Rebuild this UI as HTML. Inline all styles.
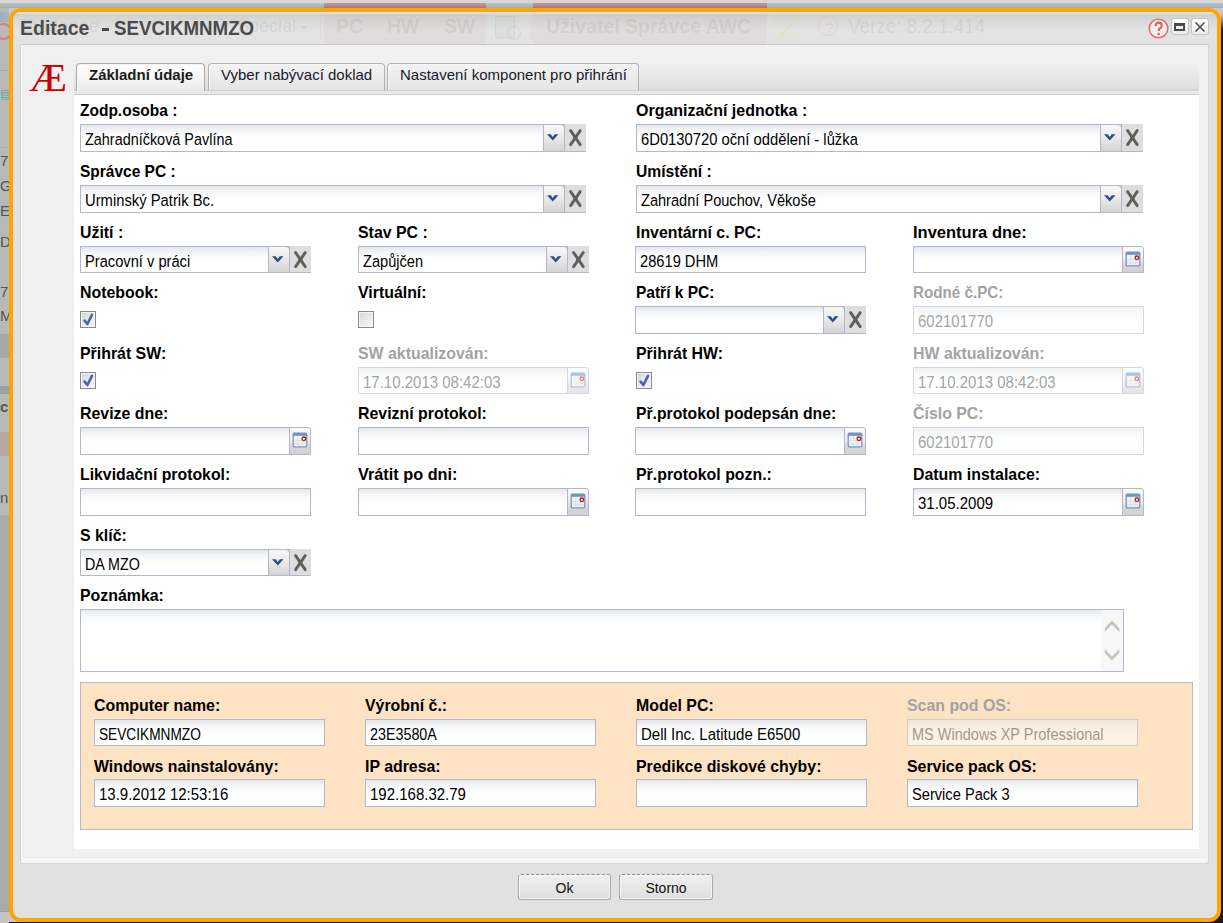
<!DOCTYPE html>
<html><head><meta charset="utf-8">
<style>
*{box-sizing:border-box}
html,body{margin:0;padding:0}
body{width:1223px;height:923px;position:relative;overflow:hidden;background:#c9c9c9;font-family:"Liberation Sans",sans-serif}
.abs{position:absolute}
/* background page */
.bgtop{position:absolute;left:0;top:0;width:1223px;height:3px;background:#d6d6d6}
.bgstrip{position:absolute;top:3px;height:5px;background:linear-gradient(#c0c3c6,#a2aab2)}
.bgred{position:absolute;top:3px;height:5px;background:linear-gradient(#c49a9a,#a87878)}
.bgleft{position:absolute;left:0;top:8px;width:9px;height:915px;background:#b9b9b9}
.bgright{position:absolute;left:1221px;top:12px;width:2px;height:911px;background:linear-gradient(#cfcfcf 0,#8a8a8a 8px,#1c1c1c 18px,#1c1c1c 100%)}
/* dialog */
.dlg{position:absolute;left:9px;top:8px;width:1212px;height:914px;border:4px solid #ffa500;border-radius:12px;background:#e1e1e1;overflow:hidden}
.tbar{position:absolute;left:0;top:0;width:1204px;height:32px;background:linear-gradient(#dde1e8 0,#dde1e8 2px,#cfd0d1 2px,#dadada 10px,#e3e3e3 18px,#e2e2e2 100%)}
.lg{left:0;font-size:15px;line-height:15px;color:#555;white-space:nowrap}
.ttl{position:absolute;left:7px;top:7px;font-weight:bold;font-size:19.5px;line-height:19.5px;color:#4b4b4b;white-space:nowrap}
.ghost{position:absolute;white-space:nowrap;font-weight:bold;color:rgba(120,120,120,0.15)}
.cpan{position:absolute;left:20px;top:44px;width:1189px;height:820px;background:linear-gradient(#f0f0f0 0,#f0f0f0 calc(100% - 5px),#f6f6f6 calc(100% - 5px));border:1px solid #d6d6d6;border-top-color:#cbcbcb;border-radius:0 0 3px 3px;box-shadow:inset 1px 0 0 #f8f8f8}
.tabbar{position:absolute;left:74px;top:61px;width:1125px;height:34px;background:linear-gradient(#f1f1f1 0,#dfdfdf 28px,#d2d2d2 29px,#d2d2d2 30px,#e9e9e9 30px,#e9e9e9 33px,#cdcdcd 33px)}
.tab{position:absolute;top:63px;height:28px;border:1px solid #b3b3b3;border-bottom-color:#cfcfcf;border-radius:4px 4px 0 0;background:linear-gradient(#f3f3f3 0,#e5e5e5 100%);box-shadow:inset 1px 1px 0 #f6f6f6;font-size:15px;line-height:15px;color:#1a1a2a;white-space:nowrap}
.tab span{position:absolute;top:3px}
.tab.act{background:linear-gradient(#ffffff 0,#fafafa 35%,#e9e9e9 100%);border-color:#aaaaaa;border-bottom:none;color:#1a1a1a;font-weight:bold}
.white{position:absolute;left:74px;top:95px;width:1125px;height:754px;background:#fff}
.logo{position:absolute;left:29px;top:58px;transform:scaleX(1.1);transform-origin:0 0;font-family:"Liberation Serif",serif;font-size:39px;line-height:39px;color:#cc0000}
.lbl{position:absolute;font-weight:bold;font-size:15.75px;line-height:15.75px;color:#000;white-space:nowrap;transform-origin:0 80%}
.lbl.dis{color:#a3a3a3}
.inp{position:absolute;border:1px solid #b4b7cc;background:linear-gradient(#e4e7ea 0,#f2f4f5 5px,#fcfcfd 10px,#fff 14px)}
.inp .tx{position:absolute;left:4px;top:7px;font-size:15px;line-height:15px;color:#000;white-space:nowrap;transform-origin:0 80%}
.inp.dis{opacity:0.55}
.inp.dis .tx{color:#5a5a5a}
.inp.cal{border-radius:0 3px 0 0}
.dd{position:absolute;right:-1px;top:-1px;bottom:-1px;width:22px;border:1px solid #b4b7cc;border-radius:0 4px 0 0;background:linear-gradient(#f7f7f7 0,#ececec 40%,#d4d4d4 100%)}
.dd svg{position:absolute;left:3px;top:9px}
.xb{position:absolute;width:21px;background:#dedede;border-bottom:1px solid #b4b7cc}
.xb svg{position:absolute;left:3px;top:4px}
.cb{position:absolute;right:0;top:0;bottom:0;width:21px;border-left:1px solid #b4b7cc;border-radius:0 3px 0 0;background:linear-gradient(#f9f9f9 0,#efefef 45%,#d6d6d6 75%,#d2d2d2 100%)}
.cb svg{position:absolute;left:2px;top:4px}
.chk{position:absolute;width:16px;height:17px;border:1px solid #8a8a8a;background:linear-gradient(135deg,#cfd3db 0,#e6e8ec 45%,#f5f5f5 100%);box-shadow:inset 0 0 0 1px #f4f4f4}
.chk svg{position:absolute;left:-1px;top:-1px}
.inp.ta{background:linear-gradient(#e5e9eb 0,#f6f7f8 6px,#fff 12px)}
.sb{position:absolute;right:0;top:0;bottom:0;width:22px;background:#f7f7f7}
.sb svg{position:absolute;left:3px;top:6px}
.opan{position:absolute;left:80px;top:682px;width:1113px;height:148px;background:#fde3c4;border:1px solid #b9b9c6}
.btn{position:absolute;top:874px;height:26px;border:1px solid #a8a8a8;border-top:1px dashed #8c8c8c;border-radius:3px;background:linear-gradient(#f0f0f0,#dedede);box-shadow:inset 1px 1px 0 #fbfbfb,inset -1px -1px 0 #f4f4f4;font-size:14px;line-height:14px;color:#111;text-align:center}
.btn span{position:absolute;left:0;right:0;top:6px}
</style></head><body>
<div class="bgtop"></div>
<div class="bgstrip" style="left:0;width:1223px"></div>
<div class="bgred" style="left:324px;width:162px"></div>
<div class="bgred" style="left:533px;width:234px"></div>
<div class="bgleft">
  <div class="abs" style="left:0;top:4px;width:9px;height:10px;background:linear-gradient(90deg,#9fb0b4,#a8b8bc)"></div>
  <div class="abs" style="left:-5px;top:15px;width:17px;height:17px;border:2px solid rgba(215,110,110,0.75);border-radius:50%"></div>
  <div class="abs" style="left:0;top:62px;width:9px;height:77px;background:#b9b9b9;border-top:1px solid #a6a6a6"></div>
  <div class="abs" style="left:0;top:80px;width:9px;height:12px;color:#5fa8a8;font-size:12px;line-height:12px">▤</div>
  <div class="abs" style="left:0;top:139px;width:9px;height:1px;background:#a9a9a9"></div>
  <div class="abs" style="left:0;top:192px;width:9px;height:23px;background:#b3b8c0"></div>
  <div class="abs lg" style="top:145px">7</div>
  <div class="abs lg" style="top:170px">G</div>
  <div class="abs lg" style="top:195px">E</div>
  <div class="abs lg" style="top:226px">D</div>
  <div class="abs lg" style="top:276px">7</div>
  <div class="abs lg" style="top:300px">M</div>
  <div class="abs" style="left:0;top:326px;width:9px;height:24px;background:#a7a7a7"></div>
  <div class="abs" style="left:0;top:378px;width:9px;height:8px;background:#9aa1aa"></div>
  <div class="abs lg" style="top:391px;font-weight:bold">c</div>
  <div class="abs" style="left:0;top:424px;width:9px;height:24px;background:#b2aaa2"></div>
  <div class="abs lg" style="top:482px">n</div>
  <div class="abs" style="left:0;top:507px;width:9px;height:396px;background:#ababab"></div>
  <div class="abs" style="left:0;top:903px;width:9px;height:20px;background:#c4c4c4;border-top:1px solid #9c9c9c"></div>
</div>
<div class="bgright"></div>
<div class="abs" style="left:1195px;top:890px;width:28px;height:33px;background:#1c1c1c"></div>
<div class="abs" style="left:22px;top:912px;width:40px;height:11px;background:#1c1c1c"></div>
<div class="abs" style="left:9px;top:922px;width:1214px;height:1px;background:#161616"></div>
<div class="dlg">
  <div class="tbar"></div>
  <div class="ghost" style="left:8px;top:3px;font-weight:normal;font-size:19px">Evidence - Li</div>
  <div class="ghost" style="left:224px;top:3px;font-weight:normal;font-size:19px;transform:scaleX(0.95);transform-origin:0 0">Speciál</div><svg class="abs" style="left:287px;top:14px" width="8" height="5"><path d="M0 0 L8 0 L4 4 Z" fill="rgba(120,120,120,0.12)"/></svg>
  <div class="abs" style="left:311px;top:2px;width:162px;height:30px;background:rgba(170,80,80,0.045)"></div>
  <div class="abs" style="left:520px;top:2px;width:234px;height:30px;background:rgba(170,80,80,0.045)"></div>
  <div class="ghost" style="left:323px;top:3px;font-size:19.5px">PC</div>
  <div class="ghost" style="left:374px;top:3px;font-size:19.5px">HW</div>
  <div class="ghost" style="left:431px;top:3px;font-size:19.5px">SW</div>
  <div class="abs" style="left:518px;top:5px;width:1px;height:22px;background:rgba(150,150,150,0.12)"></div>
  <div class="abs" style="left:307px;top:3px;width:1px;height:24px;background:rgba(150,150,150,0.12)"></div>
  <div class="abs" style="left:482px;top:4px;width:20px;height:22px;border:1px solid rgba(120,130,140,0.10);background:rgba(140,150,160,0.06)"></div>
  <div class="abs" style="left:494px;top:14px;width:14px;height:14px;border:1.5px solid rgba(220,90,90,0.14);border-radius:50%"></div>
  <div class="abs" style="left:760px;top:2px;width:28px;height:28px;background:rgba(200,200,140,0.04)"><svg class="abs" style="left:0;top:0" width="28" height="28"><path d="M6 24 L24 4" stroke="rgba(230,220,80,0.18)" stroke-width="2"/></svg></div>
  <div class="ghost" style="left:533px;top:3px;font-size:19.5px">Uživatel Správce AWC</div>
  <div class="abs" style="left:805px;top:4px;width:20px;height:20px;border:1.5px solid rgba(220,100,100,0.12);border-radius:50%"></div>
  <div class="ghost" style="left:835px;top:3px;font-weight:normal;font-size:19.5px;transform:scaleX(0.965);transform-origin:0 0">Verze: 8.2.1.414</div>
  <div class="ghost" style="left:812px;top:7px;font-size:15px;color:rgba(220,100,100,0.13)">?</div>
  <div class="ttl">Editace</div><div class="abs" style="left:89px;top:16px;width:7px;height:2.6px;background:#4b4b4b"></div><div class="ttl" style="left:101px;transform:scaleX(0.958);transform-origin:0 0">SEVCIKMNMZO</div>
  <div class="abs" style="left:1135px;top:6px"><svg width="22" height="22" viewBox="0 0 22 22"><circle cx="10.5" cy="10.5" r="9.3" fill="#f3eeee" stroke="#e07070" stroke-width="1.6"/><path d="M7.6 8 Q7.6 4.6 10.7 4.6 Q13.8 4.6 13.8 7.6 Q13.8 9.4 11.8 10.5 Q10.7 11.2 10.7 13" fill="none" stroke="#de5d5d" stroke-width="2.1"/><circle cx="10.7" cy="16" r="1.3" fill="#de5d5d"/></svg></div>
  <div class="abs" style="left:1158px;top:6px;width:18px;height:17px;border:1px solid #c4c4c4;border-radius:3px;background:linear-gradient(#fdfdfd,#ececec)"><div class="abs" style="left:2px;top:4px;width:11px;height:8px;border:2px solid #4a4a4a;border-top-width:3px"></div></div>
  <div class="abs" style="left:1178px;top:6px;width:18px;height:17px;border:1px solid #c4c4c4;border-radius:3px;background:linear-gradient(#fdfdfd,#ececec)"><svg class="abs" style="left:2px;top:2px" width="12" height="12" viewBox="0 0 12 12"><path d="M1.5 1.5 L10.5 10.5 M10.5 1.5 L1.5 10.5" stroke="#4a4a4a" stroke-width="1.5"/></svg></div>
</div>
<div class="cpan"></div>
<div class="logo">Æ</div>
<div class="tabbar"></div>
<div class="tab act" style="left:76px;width:129px"><span style="left:12px">Základní údaje</span></div>
<div class="tab" style="left:208px;width:177px"><span style="left:12px">Vyber nabývací doklad</span></div>
<div class="tab" style="left:387px;width:252px"><span style="left:12px">Nastavení komponent pro přihrání</span></div>
<div class="white"></div>
<div class="lbl" style="left:80px;top:103.27px;transform:scale(0.9841,1)">Zodp.osoba :</div>
<div class="inp" style="left:80px;top:124px;width:485px;height:28px"><span class="tx" style="transform:scale(0.961,1.07)">Zahradníčková Pavlína</span><div class="dd"><svg width="12" height="7" viewBox="0 0 12 7"><path d="M0 0.2 L3.7 0.2 L5.75 2.9 L7.8 0.2 L11.5 0.2 L5.75 6.6 Z" fill="#2b4b8d"/></svg></div></div>
<div class="xb" style="left:565px;top:124px;height:28px"><svg width="15" height="19" viewBox="0 0 15 19"><path d="M2.6 2.6 L12.2 16.6 M12.2 2.6 L2.6 16.6" stroke="#5f5f5f" stroke-width="2.9" stroke-linecap="round"/><rect x="5.4" y="7.6" width="4" height="4" fill="#5f5f5f"/></svg></div>
<div class="lbl" style="left:636px;top:103.27px;transform:scale(1.0137,1)">Organizační jednotka :</div>
<div class="inp" style="left:636px;top:124px;width:486px;height:28px"><span class="tx" style="transform:scale(0.985,1.07)">6D0130720 oční oddělení - lůžka</span><div class="dd"><svg width="12" height="7" viewBox="0 0 12 7"><path d="M0 0.2 L3.7 0.2 L5.75 2.9 L7.8 0.2 L11.5 0.2 L5.75 6.6 Z" fill="#2b4b8d"/></svg></div></div>
<div class="xb" style="left:1122px;top:124px;height:28px"><svg width="15" height="19" viewBox="0 0 15 19"><path d="M2.6 2.6 L12.2 16.6 M12.2 2.6 L2.6 16.6" stroke="#5f5f5f" stroke-width="2.9" stroke-linecap="round"/><rect x="5.4" y="7.6" width="4" height="4" fill="#5f5f5f"/></svg></div>
<div class="lbl" style="left:80px;top:164.27px;transform:scale(0.9841,1)">Správce PC :</div>
<div class="inp" style="left:80px;top:185px;width:485px;height:28px"><span class="tx" style="transform:scale(0.986,1.07)">Urminský Patrik Bc.</span><div class="dd"><svg width="12" height="7" viewBox="0 0 12 7"><path d="M0 0.2 L3.7 0.2 L5.75 2.9 L7.8 0.2 L11.5 0.2 L5.75 6.6 Z" fill="#2b4b8d"/></svg></div></div>
<div class="xb" style="left:565px;top:185px;height:28px"><svg width="15" height="19" viewBox="0 0 15 19"><path d="M2.6 2.6 L12.2 16.6 M12.2 2.6 L2.6 16.6" stroke="#5f5f5f" stroke-width="2.9" stroke-linecap="round"/><rect x="5.4" y="7.6" width="4" height="4" fill="#5f5f5f"/></svg></div>
<div class="lbl" style="left:636px;top:164.27px;transform:scale(0.9940,1)">Umístění :</div>
<div class="inp" style="left:636px;top:185px;width:486px;height:28px"><span class="tx" style="transform:scale(0.972,1.07)">Zahradní Pouchov, Věkoše</span><div class="dd"><svg width="12" height="7" viewBox="0 0 12 7"><path d="M0 0.2 L3.7 0.2 L5.75 2.9 L7.8 0.2 L11.5 0.2 L5.75 6.6 Z" fill="#2b4b8d"/></svg></div></div>
<div class="xb" style="left:1122px;top:185px;height:28px"><svg width="15" height="19" viewBox="0 0 15 19"><path d="M2.6 2.6 L12.2 16.6 M12.2 2.6 L2.6 16.6" stroke="#5f5f5f" stroke-width="2.9" stroke-linecap="round"/><rect x="5.4" y="7.6" width="4" height="4" fill="#5f5f5f"/></svg></div>
<div class="lbl" style="left:80px;top:225.27px;transform:scale(1.0087,1)">Užití :</div>
<div class="inp" style="left:80px;top:246px;width:210px;height:27px"><span class="tx" style="transform:scale(0.978,1.07)">Pracovní v práci</span><div class="dd"><svg width="12" height="7" viewBox="0 0 12 7"><path d="M0 0.2 L3.7 0.2 L5.75 2.9 L7.8 0.2 L11.5 0.2 L5.75 6.6 Z" fill="#2b4b8d"/></svg></div></div>
<div class="xb" style="left:290px;top:246px;height:27px"><svg width="15" height="19" viewBox="0 0 15 19"><path d="M2.6 2.6 L12.2 16.6 M12.2 2.6 L2.6 16.6" stroke="#5f5f5f" stroke-width="2.9" stroke-linecap="round"/><rect x="5.4" y="7.6" width="4" height="4" fill="#5f5f5f"/></svg></div>
<div class="lbl" style="left:358px;top:225.27px;transform:scale(1.0087,1)">Stav PC :</div>
<div class="inp" style="left:358px;top:246px;width:210px;height:27px"><span class="tx" style="transform:scale(0.974,1.07)">Zapůjčen</span><div class="dd"><svg width="12" height="7" viewBox="0 0 12 7"><path d="M0 0.2 L3.7 0.2 L5.75 2.9 L7.8 0.2 L11.5 0.2 L5.75 6.6 Z" fill="#2b4b8d"/></svg></div></div>
<div class="xb" style="left:568px;top:246px;height:27px"><svg width="15" height="19" viewBox="0 0 15 19"><path d="M2.6 2.6 L12.2 16.6 M12.2 2.6 L2.6 16.6" stroke="#5f5f5f" stroke-width="2.9" stroke-linecap="round"/><rect x="5.4" y="7.6" width="4" height="4" fill="#5f5f5f"/></svg></div>
<div class="lbl" style="left:636px;top:225.27px;transform:scale(1.0087,1)">Inventární c. PC:</div>
<div class="inp" style="left:635px;top:246px;width:231px;height:27px"><span class="tx" style="transform:scale(0.978,1.07)">28619 DHM</span></div>
<div class="lbl" style="left:913px;top:225.27px;transform:scale(1.0481,1)">Inventura dne:</div>
<div class="inp cal" style="left:913px;top:246px;width:231px;height:27px"><span class="tx" style="transform:scale(1.0,1.07)"></span><div class="cb"><svg width="16" height="16" viewBox="0 0 16 16"><rect x="1.2" y="1.2" width="13.6" height="13.6" rx="1.2" fill="#f2f2f2" stroke="#7593c4" stroke-width="1.3"/><rect x="1" y="1" width="14" height="2.8" fill="#7391c2"/><path d="M5.8 4 V14.5 M10.2 4 V14.5 M1.8 8.6 H14.2 M1.8 11.8 H14.2" stroke="#dcdcdc" stroke-width="0.9"/><circle cx="11.9" cy="6.8" r="1.8" fill="#fafafa" stroke="#b21a1a" stroke-width="1.3"/></svg></div></div>
<div class="lbl" style="left:80px;top:285.27px;transform:scale(1.0087,1)">Notebook:</div>
<div class="chk" style="left:80px;top:311px"><svg width="16" height="17" viewBox="0 0 16 17"><path d="M4.6 9.6 L7.4 13 L12 3.8" stroke="#4d64aa" stroke-width="2.6" fill="none" stroke-linejoin="round" stroke-linecap="round"/></svg></div>
<div class="lbl" style="left:358px;top:285.27px;transform:scale(1.0087,1)">Virtuální:</div>
<div class="chk" style="left:358px;top:311px"></div>
<div class="lbl" style="left:636px;top:285.27px;transform:scale(0.9841,1)">Patří k PC:</div>
<div class="inp" style="left:635px;top:306px;width:210px;height:28px"><span class="tx" style="transform:scale(1.0,1.07)"></span><div class="dd"><svg width="12" height="7" viewBox="0 0 12 7"><path d="M0 0.2 L3.7 0.2 L5.75 2.9 L7.8 0.2 L11.5 0.2 L5.75 6.6 Z" fill="#2b4b8d"/></svg></div></div>
<div class="xb" style="left:845px;top:306px;height:28px"><svg width="15" height="19" viewBox="0 0 15 19"><path d="M2.6 2.6 L12.2 16.6 M12.2 2.6 L2.6 16.6" stroke="#5f5f5f" stroke-width="2.9" stroke-linecap="round"/><rect x="5.4" y="7.6" width="4" height="4" fill="#5f5f5f"/></svg></div>
<div class="lbl dis" style="left:913px;top:285.27px;transform:scale(0.9644,1)">Rodné č.PC:</div>
<div class="inp dis" style="left:913px;top:306px;width:231px;height:28px"><span class="tx" style="transform:scale(1.0,1.07)">602101770</span></div>
<div class="lbl" style="left:80px;top:346.27px;transform:scale(1.0087,1)">Přihrát SW:</div>
<div class="chk" style="left:80px;top:372px"><svg width="16" height="17" viewBox="0 0 16 17"><path d="M4.6 9.6 L7.4 13 L12 3.8" stroke="#4d64aa" stroke-width="2.6" fill="none" stroke-linejoin="round" stroke-linecap="round"/></svg></div>
<div class="lbl dis" style="left:358px;top:346.27px;transform:scale(1.0087,1)">SW aktualizován:</div>
<div class="inp dis cal" style="left:358px;top:367px;width:231px;height:27px"><span class="tx" style="transform:scale(1.0,1.07)">17.10.2013 08:42:03</span><div class="cb"><svg width="16" height="16" viewBox="0 0 16 16"><rect x="1.2" y="1.2" width="13.6" height="13.6" rx="1.2" fill="#f2f2f2" stroke="#7593c4" stroke-width="1.3"/><rect x="1" y="1" width="14" height="2.8" fill="#7391c2"/><path d="M5.8 4 V14.5 M10.2 4 V14.5 M1.8 8.6 H14.2 M1.8 11.8 H14.2" stroke="#dcdcdc" stroke-width="0.9"/><circle cx="11.9" cy="6.8" r="1.8" fill="#fafafa" stroke="#b21a1a" stroke-width="1.3"/></svg></div></div>
<div class="lbl" style="left:636px;top:346.27px;transform:scale(1.0087,1)">Přihrát HW:</div>
<div class="chk" style="left:636px;top:372px"><svg width="16" height="17" viewBox="0 0 16 17"><path d="M4.6 9.6 L7.4 13 L12 3.8" stroke="#4d64aa" stroke-width="2.6" fill="none" stroke-linejoin="round" stroke-linecap="round"/></svg></div>
<div class="lbl dis" style="left:913px;top:346.27px;transform:scale(1.0087,1)">HW aktualizován:</div>
<div class="inp dis cal" style="left:913px;top:367px;width:231px;height:27px"><span class="tx" style="transform:scale(1.0,1.07)">17.10.2013 08:42:03</span><div class="cb"><svg width="16" height="16" viewBox="0 0 16 16"><rect x="1.2" y="1.2" width="13.6" height="13.6" rx="1.2" fill="#f2f2f2" stroke="#7593c4" stroke-width="1.3"/><rect x="1" y="1" width="14" height="2.8" fill="#7391c2"/><path d="M5.8 4 V14.5 M10.2 4 V14.5 M1.8 8.6 H14.2 M1.8 11.8 H14.2" stroke="#dcdcdc" stroke-width="0.9"/><circle cx="11.9" cy="6.8" r="1.8" fill="#fafafa" stroke="#b21a1a" stroke-width="1.3"/></svg></div></div>
<div class="lbl" style="left:80px;top:406.27px;transform:scale(1.0087,1)">Revize dne:</div>
<div class="inp cal" style="left:80px;top:427px;width:231px;height:28px"><span class="tx" style="transform:scale(1.0,1.07)"></span><div class="cb"><svg width="16" height="16" viewBox="0 0 16 16"><rect x="1.2" y="1.2" width="13.6" height="13.6" rx="1.2" fill="#f2f2f2" stroke="#7593c4" stroke-width="1.3"/><rect x="1" y="1" width="14" height="2.8" fill="#7391c2"/><path d="M5.8 4 V14.5 M10.2 4 V14.5 M1.8 8.6 H14.2 M1.8 11.8 H14.2" stroke="#dcdcdc" stroke-width="0.9"/><circle cx="11.9" cy="6.8" r="1.8" fill="#fafafa" stroke="#b21a1a" stroke-width="1.3"/></svg></div></div>
<div class="lbl" style="left:358px;top:406.27px;transform:scale(1.0087,1)">Revizní protokol:</div>
<div class="inp" style="left:358px;top:427px;width:231px;height:28px"><span class="tx" style="transform:scale(1.0,1.07)"></span></div>
<div class="lbl" style="left:636px;top:406.27px;transform:scale(0.9989,1)">Př.protokol podepsán dne:</div>
<div class="inp cal" style="left:635px;top:427px;width:231px;height:28px"><span class="tx" style="transform:scale(1.0,1.07)"></span><div class="cb"><svg width="16" height="16" viewBox="0 0 16 16"><rect x="1.2" y="1.2" width="13.6" height="13.6" rx="1.2" fill="#f2f2f2" stroke="#7593c4" stroke-width="1.3"/><rect x="1" y="1" width="14" height="2.8" fill="#7391c2"/><path d="M5.8 4 V14.5 M10.2 4 V14.5 M1.8 8.6 H14.2 M1.8 11.8 H14.2" stroke="#dcdcdc" stroke-width="0.9"/><circle cx="11.9" cy="6.8" r="1.8" fill="#fafafa" stroke="#b21a1a" stroke-width="1.3"/></svg></div></div>
<div class="lbl dis" style="left:913px;top:406.27px;transform:scale(1.0087,1)">Číslo PC:</div>
<div class="inp dis" style="left:913px;top:427px;width:231px;height:28px"><span class="tx" style="transform:scale(1.0,1.07)">602101770</span></div>
<div class="lbl" style="left:80px;top:467.27px;transform:scale(1.0038,1)">Likvidační protokol:</div>
<div class="inp" style="left:80px;top:488px;width:231px;height:28px"><span class="tx" style="transform:scale(1.0,1.07)"></span></div>
<div class="lbl" style="left:358px;top:467.27px;transform:scale(1.0333,1)">Vrátit po dni:</div>
<div class="inp cal" style="left:358px;top:488px;width:231px;height:28px"><span class="tx" style="transform:scale(1.0,1.07)"></span><div class="cb"><svg width="16" height="16" viewBox="0 0 16 16"><rect x="1.2" y="1.2" width="13.6" height="13.6" rx="1.2" fill="#f2f2f2" stroke="#7593c4" stroke-width="1.3"/><rect x="1" y="1" width="14" height="2.8" fill="#7391c2"/><path d="M5.8 4 V14.5 M10.2 4 V14.5 M1.8 8.6 H14.2 M1.8 11.8 H14.2" stroke="#dcdcdc" stroke-width="0.9"/><circle cx="11.9" cy="6.8" r="1.8" fill="#fafafa" stroke="#b21a1a" stroke-width="1.3"/></svg></div></div>
<div class="lbl" style="left:636px;top:467.27px;transform:scale(1.0087,1)">Př.protokol pozn.:</div>
<div class="inp" style="left:635px;top:488px;width:231px;height:28px"><span class="tx" style="transform:scale(1.0,1.07)"></span></div>
<div class="lbl" style="left:913px;top:467.27px;transform:scale(1.0087,1)">Datum instalace:</div>
<div class="inp cal" style="left:913px;top:488px;width:231px;height:28px"><span class="tx" style="transform:scale(1.0,1.07)">31.05.2009</span><div class="cb"><svg width="16" height="16" viewBox="0 0 16 16"><rect x="1.2" y="1.2" width="13.6" height="13.6" rx="1.2" fill="#f2f2f2" stroke="#7593c4" stroke-width="1.3"/><rect x="1" y="1" width="14" height="2.8" fill="#7391c2"/><path d="M5.8 4 V14.5 M10.2 4 V14.5 M1.8 8.6 H14.2 M1.8 11.8 H14.2" stroke="#dcdcdc" stroke-width="0.9"/><circle cx="11.9" cy="6.8" r="1.8" fill="#fafafa" stroke="#b21a1a" stroke-width="1.3"/></svg></div></div>
<div class="lbl" style="left:80px;top:528.27px;transform:scale(1.0087,1)">S klíč:</div>
<div class="inp" style="left:80px;top:549px;width:210px;height:27px"><span class="tx" style="transform:scale(0.954,1.07)">DA MZO</span><div class="dd"><svg width="12" height="7" viewBox="0 0 12 7"><path d="M0 0.2 L3.7 0.2 L5.75 2.9 L7.8 0.2 L11.5 0.2 L5.75 6.6 Z" fill="#2b4b8d"/></svg></div></div>
<div class="xb" style="left:290px;top:549px;height:27px"><svg width="15" height="19" viewBox="0 0 15 19"><path d="M2.6 2.6 L12.2 16.6 M12.2 2.6 L2.6 16.6" stroke="#5f5f5f" stroke-width="2.9" stroke-linecap="round"/><rect x="5.4" y="7.6" width="4" height="4" fill="#5f5f5f"/></svg></div>
<div class="lbl" style="left:80px;top:588.27px;transform:scale(1.0087,1)">Poznámka:</div>
<div class="inp ta" style="left:80px;top:609px;width:1044px;height:63px"><div class="sb"><svg width="17" height="50" viewBox="0 0 17 50"><path d="M0.8 15.8 L0.8 12.3 L7.9 4.6 L15.3 12.3 L15.3 15.8 L7.9 8.4 Z" fill="#c2c2c2"/><path d="M0.8 33.2 L0.8 36.7 L7.9 44.4 L15.3 36.7 L15.3 33.2 L7.9 40.6 Z" fill="#c2c2c2"/></svg></div></div>
<div class="opan"></div>
<div class="lbl" style="left:94px;top:698.27px;transform:scale(1.0087,1)">Computer name:</div>
<div class="inp" style="left:94px;top:719px;width:231px;height:27px"><span class="tx" style="transform:scale(0.912,1.07)">SEVCIKMNMZO</span></div>
<div class="lbl" style="left:365px;top:698.27px;transform:scale(1.0087,1)">Výrobní č.:</div>
<div class="inp" style="left:365px;top:719px;width:231px;height:27px"><span class="tx" style="transform:scale(0.954,1.07)">23E3580A</span></div>
<div class="lbl" style="left:636px;top:698.27px;transform:scale(1.0087,1)">Model PC:</div>
<div class="inp" style="left:636px;top:719px;width:231px;height:27px"><span class="tx" style="transform:scale(1.0,1.07)">Dell Inc. Latitude E6500</span></div>
<div class="lbl dis" style="left:907px;top:698.27px;transform:scale(1.0087,1)">Scan pod OS:</div>
<div class="inp dis" style="left:907px;top:719px;width:231px;height:27px"><span class="tx" style="transform:scale(0.967,1.07)">MS Windows XP Professional</span></div>
<div class="lbl" style="left:94px;top:759.27px;transform:scale(1.0058,1)">Windows nainstalovány:</div>
<div class="inp" style="left:94px;top:779px;width:231px;height:28px"><span class="tx" style="transform:scale(1.0,1.07)">13.9.2012 12:53:16</span></div>
<div class="lbl" style="left:365px;top:759.27px;transform:scale(1.0087,1)">IP adresa:</div>
<div class="inp" style="left:365px;top:779px;width:231px;height:28px"><span class="tx" style="transform:scale(1.0,1.07)">192.168.32.79</span></div>
<div class="lbl" style="left:636px;top:759.27px;transform:scale(1.0087,1)">Predikce diskové chyby:</div>
<div class="inp" style="left:636px;top:779px;width:231px;height:28px"><span class="tx" style="transform:scale(1.0,1.07)"></span></div>
<div class="lbl" style="left:907px;top:759.27px;transform:scale(1.0087,1)">Service pack OS:</div>
<div class="inp" style="left:907px;top:779px;width:231px;height:28px"><span class="tx" style="transform:scale(0.976,1.07)">Service Pack 3</span></div>
<div class="btn" style="left:518px;width:93px"><span>Ok</span></div>
<div class="btn" style="left:619px;width:94px"><span>Storno</span></div>
</body></html>
